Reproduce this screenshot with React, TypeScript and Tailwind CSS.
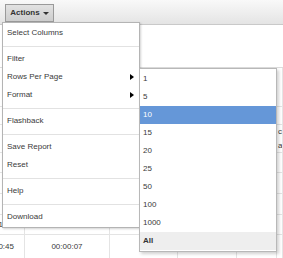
import React from "react";

// Main actions menu entries; "sep" draws a divider line
type MenuEntry = { label: string; sub?: boolean } | "sep";

const menu: MenuEntry[] = [
  { label: "Select Columns" },
  "sep",
  { label: "Filter" },
  { label: "Rows Per Page", sub: true },
  { label: "Format", sub: true },
  "sep",
  { label: "Flashback" },
  "sep",
  { label: "Save Report" },
  { label: "Reset" },
  "sep",
  { label: "Help" },
  "sep",
  { label: "Download" },
];

const rowCounts = ["1", "5", "10", "15", "20", "25", "50", "100", "1000"];

// Background report rows (mostly hidden behind the menus)
const rows: { h: string; cells: string[] }[] = [
  { h: "h-[39px]", cells: ["", "", "", "", "", ""] },
  { h: "h-[18px]", cells: ["", "", "", "", "", ""] },
  { h: "h-[28px]", cells: ["", "", "", "", "", "cpu\navg"] },
  { h: "h-[20px]", cells: ["", "", "", "", "", ""] },
  { h: "h-[21px]", cells: ["", "", "", "", "", ""] },
  { h: "h-[21px]", cells: ["", "", "", "", "", ""] },
  { h: "h-[20px]", cells: ["01:00", "00:02:10", "", "", "", ""] },
  { h: "h-[24px]", cells: ["00:45", "00:00:07", "", "", "", ""] },
];

const widths = ["w-[25px]", "w-[85px]", "w-[68px]", "w-[59px]", "w-[40px]", "w-[6px]"];

const App: React.FC = () => {
  return (
    <div className="relative w-[283px] h-[258px] overflow-hidden bg-white font-['Liberation_Sans',Arial,sans-serif] text-[8px] text-[#3a3a3a]">
      {/* toolbar */}
      <div className="h-[25px] border-b border-[#c9c9c9] bg-linear-to-b from-[#f9f9f9] to-[#e4e4e4] pt-[4px] pl-[5px]">
        <div className="h-[18px] w-[49px] border border-[#9a9a9a] bg-linear-to-b from-[#e2e2e2] to-[#cdcdcd] flex items-center justify-center gap-[3px] font-bold text-[#333]">
          <span>Actions</span>
          <span className="border-x-[3px] border-x-transparent border-t-[3px] border-t-[#333] mt-[1px]" />
        </div>
      </div>

      <div className="h-[42px]" />

      {/* report table behind the menus */}
      <div className="border-t border-[#dcdcdc]">
        {rows.map((row, i) => (
          <div key={i} className={`flex border-b border-[#e4e4e4] ${row.h}`}>
            {row.cells.map((c, j) => (
              <div
                key={j}
                className={`${widths[j]} shrink-0 overflow-hidden border-r border-[#e4e4e4] flex items-center whitespace-pre leading-[14px] ${
                  j === 0 ? "justify-end pr-[10px]" : j === 5 ? "justify-start pl-[1px]" : "justify-center"
                }`}
              >
                <span className="shrink-0">{c}</span>
              </div>
            ))}
          </div>
        ))}
      </div>

      {/* actions dropdown */}
      <div className="absolute left-[2px] top-[22px] w-[138px] border border-[#b4b4b4] bg-white py-[1px] shadow-[1px_1px_2px_rgba(0,0,0,0.18)]">
        {menu.map((m, i) =>
          m === "sep" ? (
            <div key={i} className="h-[8px] flex items-center">
              <div className="h-px w-full bg-[#e2e2e2]" />
            </div>
          ) : (
            <div key={i} className="h-[18px] flex items-center justify-between pl-[4px] pr-[5px]">
              <span>{m.label}</span>
              {m.sub && (
                <span className="border-y-[3px] border-y-transparent border-l-[4px] border-l-black" />
              )}
            </div>
          )
        )}
      </div>

      {/* rows per page submenu */}
      <div className="absolute left-[139px] top-[68px] w-[138px] border border-[#b8b8b8] bg-white py-[1px] shadow-[2px_2px_3px_rgba(0,0,0,0.18)]">
        {rowCounts.map((n) => (
          <div
            key={n}
            className={`h-[18px] flex items-center pl-[3px] ${n === "10" ? "bg-[#6597d8] text-white" : ""}`}
          >
            {n}
          </div>
        ))}
        <div className="h-[18px] flex items-center pl-[3px] bg-[#eeeeee] font-bold text-[#333]">All</div>
      </div>
    </div>
  );
};

export default App;
